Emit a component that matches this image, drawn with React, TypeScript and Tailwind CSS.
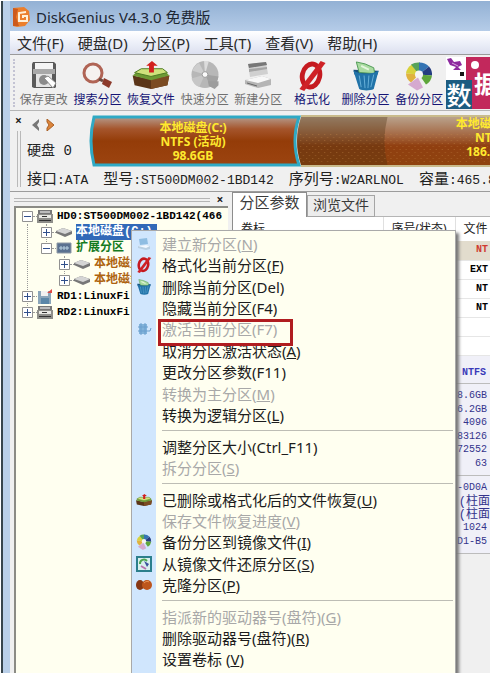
import React from "react";

const sans = "font-['Noto_Sans','Noto_Sans_CJK_SC',sans-serif]";
const mono = "font-['Liberation_Mono','Noto_Sans_CJK_SC',monospace]";

type IconProps = { className?: string };

function LogoIcon() {
  return (
    <svg viewBox="0 0 20 22" className="h-[22px] w-5" aria-hidden="true">
      <path d="M1 2l11-1 5 4 1 9-5 6-8 1-4-1z" fill="#ec7f2c" />
      <path d="M1 2l5 1-2 8 3 9-6 0z" fill="#cc5a1c" />
      <path d="M14 6l-7 1v8h8v-5h-4v2" fill="none" stroke="#fff0d8" strokeWidth="2" />
    </svg>
  );
}

function SaveIcon({ className = "" }: IconProps) {
  return (
    <svg viewBox="0 0 28 28" className={className} aria-hidden="true">
      <path d="M3 1h21l2 2v23l-1 1H4l-2-1V3z" fill="#5a5a5a" />
      <path d="M5 2h18v6H5z" fill="#f4f4f4" />
      <path d="M3 8h22v5H3z" fill="#a9a9a9" />
      <path d="M6 13h16v13H6z" fill="#e4e4e4" />
      <circle cx="14" cy="19" r="5" fill="#8b8b8b" />
      <path d="M14 17l4-2 8 7-3 5z" fill="#fff" stroke="#888" />
    </svg>
  );
}

function SearchIcon({ className = "" }: IconProps) {
  return (
    <svg viewBox="0 0 30 28" className={className} aria-hidden="true">
      <circle cx="11" cy="12" r="9" fill="#f6f2f0" stroke="#b06455" strokeWidth="3" />
      <path d="M17 18l4 2" stroke="#6e4b42" strokeWidth="3" />
      <path d="M22 17l8 4-3 6-7-4z" fill="#8c3a2b" />
    </svg>
  );
}

function RecoverIcon({ className = "" }: IconProps) {
  return (
    <svg viewBox="0 0 38 29" className={className} aria-hidden="true">
      <path d="M0 15l19 4 19-4-2 10-17 4-17-4z" fill="#5b3518" />
      <path d="M19 19l19-4-2 10-17 4z" fill="#7b4b22" />
      <path d="M0 15l7-6h25l6 6-19 5z" fill="#6d9a34" />
      <path d="M2 12l7-4h22l5 4-17 4z" fill="#cfe27c" stroke="#4c7a22" />
      <path d="M17 12V5h-3l6-5 6 5h-4v7z" fill="#d2201d" />
    </svg>
  );
}

function DiscIcon({ className = "" }: IconProps) {
  return (
    <svg viewBox="0 0 30 29" className={className} aria-hidden="true">
      <circle cx="15" cy="14" r="14" fill="#b7b7b7" />
      <path d="M15 14L2 10A14 14 0 0 1 9 2z" fill="#cdcdcd" />
      <path d="M15 14l-1-14h5z" fill="#dcdcdc" />
      <path d="M15 14l14 2a14 14 0 0 1-8 11z" fill="#a2a2a2" />
      <path d="M15 14l-6 13a14 14 0 0 1-8-9z" fill="#c6c6c6" />
      <circle cx="15" cy="14" r="3" fill="#fafafa" stroke="#999" />
      <path d="M18 21h11v4l-4 4-6-3z" fill="#9d9d9d" />
    </svg>
  );
}

function DriveNewIcon({ className = "" }: IconProps) {
  return (
    <svg viewBox="0 0 28 28" className={className} aria-hidden="true">
      <path d="M4 3l18-2 2 12-18 3z" fill="#d0d0d0" />
      <path d="M4 3l18-2 1 3-18 3z" fill="#777" />
      <path d="M5 8l18-2v2L5 11z" fill="#a5a5a5" />
      <path d="M1 19l17-4 9 3v6l-13 3-13-4z" fill="#b5b5b5" />
      <path d="M1 19l17-4 9 3-13 4z" fill="#f8f8f8" />
      <path d="M3 22l10 3" stroke="#666" />
    </svg>
  );
}

function FormatIcon({ className = "" }: IconProps) {
  return (
    <svg viewBox="0 0 30 31" className={className} aria-hidden="true">
      <ellipse cx="14" cy="15" rx="9" ry="12" fill="none" stroke="#c51a20" strokeWidth="5" transform="rotate(12 14 15)" />
      <path d="M24 0l5 2L7 31l-5-2z" fill="#cf2226" />
    </svg>
  );
}

function TrashIcon({ className = "" }: IconProps) {
  return (
    <svg viewBox="0 0 28 31" className={className} aria-hidden="true">
      <path d="M1 9l26 1-1 4H2z" fill="#174f7c" />
      <path d="M7 12L4 1l9 2 9 4 1 6z" fill="#a9dba0" stroke="#4f9a55" />
      <path d="M9 5l8 4" stroke="#e4f6de" strokeWidth="2" />
      <path d="M1 10c8 4 18 4 26 0l-5 19c-4 2-11 2-15 0z" fill="#2173a8" />
      <path d="M7 15l2 12M12 15l1 13M17 15l-1 13M22 14l-3 13" stroke="#69b1da" strokeWidth="1" />
    </svg>
  );
}

function WheelIcon({ className = "" }: IconProps) {
  return (
    <svg viewBox="0 0 28 29" className={className} aria-hidden="true">
      <path d="M14 13L1 12A13 12 0 0 1 7 3z" fill="#d8d23c" />
      <path d="M14 13L6 3A13 12 0 0 1 15 1z" fill="#56a35a" />
      <path d="M14 13V1A13 12 0 0 1 24 5z" fill="#3474b3" />
      <path d="M14 13L24 5a12 12 0 0 1 3 9z" fill="#253d80" />
      <path d="M14 13l13 1a12 12 0 0 1-6 9z" fill="#5fa63b" />
      <path d="M14 13L1 12c0 4 2 7 5 9z" fill="#e0b23e" />
      <circle cx="14" cy="13" r="4" fill="#f5f5f5" />
      <path d="M13 16l5 10-6 3-9-6z" fill="#d5a9cf" />
    </svg>
  );
}

function RestoreIcon({ className = "" }: IconProps) {
  return (
    <svg viewBox="0 0 16 16" className={className} aria-hidden="true">
      <path d="M1 1h14v14H1z" fill="#d9f0ee" stroke="#2b7f8c" strokeWidth="2" />
      <path d="M4 8a4 4 0 0 1 7-3" fill="none" stroke="#4fa651" strokeWidth="2" />
      <path d="M8 5l5 3-2 3z" fill="#3a529c" />
      <path d="M5 10l5 3" stroke="#b772ae" strokeWidth="2" />
    </svg>
  );
}

function CloneIcon({ className = "" }: IconProps) {
  return (
    <svg viewBox="0 0 16 16" className={className} aria-hidden="true">
      <ellipse cx="4" cy="8" rx="4" ry="5" fill="#873713" />
      <ellipse cx="11" cy="8" rx="5" ry="5" fill="#bd551c" />
      <path d="M8 6c2-2 4-2 5-1" stroke="#e99354" fill="none" />
    </svg>
  );
}

function NewPartIcon({ className = "" }: IconProps) {
  return (
    <svg viewBox="0 0 16 16" className={className} aria-hidden="true">
      <path d="M3 3l8-1 1 6-8 1z" fill="#8fbde2" />
      <path d="M2 10l8-1 4 1v3l-4 1-8-2z" fill="#b9cfe2" />
      <path d="M2 10l8-1 4 1-4 2z" fill="#f2f8ff" />
    </svg>
  );
}

function ActivateIcon({ className = "" }: IconProps) {
  return (
    <svg viewBox="0 0 16 16" className={className} aria-hidden="true">
      <path d="M3 3h8v10H3z" fill="#82b3da" />
      <path d="M5 2v12M9 2v12M2 6h10M2 10h12l1-3" fill="none" stroke="#6a9fce" />
    </svg>
  );
}

function Banner() {
  return (
    <div className="grid h-[52px] min-w-0 flex-1 grid-cols-[20px_1fr] overflow-hidden bg-[#c2285c] text-white">
      <div className="col-start-1 row-start-1 h-6 bg-white">
        <svg viewBox="0 0 20 24" className="h-6 w-5" aria-hidden="true">
          <path d="M1 2l4-1 3 4 6-1 2 4-4 2 3 3-8 0 3-3-6-2z" fill="#8d2a9f" />
          <path d="M6 6l6 3" stroke="#d8a9de" />
          <path d="M14 15h4v4h-4z" fill="#151515" />
        </svg>
      </div>
      <div className="relative col-start-2 row-start-1 font-['Noto_Sans_CJK_SC',sans-serif]">
        <span className="absolute left-[5px] top-1 size-2 rounded-full bg-white" />
        <span className="absolute left-2 top-3 text-2xl font-bold leading-7">据</span>
        <span className="absolute -left-5 top-[23px] h-[30px] w-[26px] bg-[#1d5c80] text-center text-[25px] font-medium leading-7">数</span>
      </div>
    </div>
  );
}

const tools = [
  { label: "保存更改", off: true, icon: <SaveIcon className="h-7 w-7" /> },
  { label: "搜索分区", off: false, icon: <SearchIcon className="h-7 w-[30px]" /> },
  { label: "恢复文件", off: false, icon: <RecoverIcon className="h-7 w-[38px]" /> },
  { label: "快速分区", off: true, icon: <DiscIcon className="h-7 w-[30px]" /> },
  { label: "新建分区", off: true, icon: <DriveNewIcon className="h-7 w-7" /> },
  { label: "格式化", off: false, icon: <FormatIcon className="h-[30px] w-[30px]" /> },
  { label: "删除分区", off: false, icon: <TrashIcon className="h-[30px] w-7" /> },
  { label: "备份分区", off: false, icon: <WheelIcon className="h-[30px] w-7" /> },
];

const menus = ["文件(F)", "硬盘(D)", "分区(P)", "工具(T)", "查看(V)", "帮助(H)"];

type Item = { text: string; accel?: string; tail?: string; off?: boolean; icon?: React.ReactNode; marked?: boolean };

const small = "size-4";
const groups: { height: string; items: Item[] }[] = [
  {
    height: "h-[193px]",
    items: [
      { text: "建立新分区(", accel: "N", tail: ")", off: true, icon: <NewPartIcon className={small} /> },
      { text: "格式化当前分区(", accel: "F", tail: ")", icon: <FormatIcon className={small} /> },
      { text: "删除当前分区(Del)", icon: <TrashIcon className={small} /> },
      { text: "隐藏当前分区(F4)" },
      { text: "激活当前分区(F7)", off: true, icon: <ActivateIcon className={small} />, marked: true },
      { text: "取消分区激活状态(", accel: "A", tail: ")" },
      { text: "更改分区参数(F11)" },
      { text: "转换为主分区(", accel: "M", tail: ")", off: true },
      { text: "转换为逻辑分区(", accel: "L", tail: ")" },
    ],
  },
  {
    height: "h-[43px]",
    items: [
      { text: "调整分区大小(Ctrl_F11)" },
      { text: "拆分分区(", accel: "S", tail: ")", off: true },
    ],
  },
  {
    height: "h-[107px]",
    items: [
      { text: "已删除或格式化后的文件恢复(", accel: "U", tail: ")", icon: <RecoverIcon className={small} /> },
      { text: "保存文件恢复进度(", accel: "V", tail: ")", off: true },
      { text: "备份分区到镜像文件(", accel: "I", tail: ")", icon: <WheelIcon className={small} /> },
      { text: "从镜像文件还原分区(", accel: "S", tail: ")", icon: <RestoreIcon className={small} /> },
      { text: "克隆分区(", accel: "P", tail: ")", icon: <CloneIcon className={small} /> },
    ],
  },
  {
    height: "h-[64px]",
    items: [
      { text: "指派新的驱动器号(盘符)(", accel: "G", tail: ")", off: true },
      { text: "删除驱动器号(盘符)(", accel: "R", tail: ")" },
      { text: "设置卷标 (", accel: "V", tail: ")" },
    ],
  },
];

function ContextMenu() {
  return (
    <div
      role="menu"
      className={`absolute left-[131px] top-[230px] h-[460px] w-[325px] border border-[#a9a9a9] bg-[#fffff0] bg-linear-to-r from-[#d0e6fd] from-[24px] to-[#fffff0] to-[24px] pt-[2px] shadow-[3px_3px_3px_#777] ${sans}`}
    >
      {groups.map((g, n) => (
        <React.Fragment key={g.height}>
          {n > 0 && <div role="separator" className="mb-[5px] ml-[30px] mr-[2px] mt-1 h-px bg-[#bdbdb5]" />}
          <div className={`grid ${g.height}`}>
            {g.items.map((it) => (
              <button
                key={it.text}
                type="button"
                role="menuitem"
                disabled={it.off}
                className={`relative flex min-h-0 items-center text-left text-[15px] leading-5 ${it.off ? "text-[#a8a8a8]" : "text-[#1c1c1c]"}`}
              >
                <span className="flex w-[30px] shrink-0 pl-1">{it.icon}</span>
                <span className="whitespace-nowrap">
                  {it.text}
                  {it.accel && <u className="underline-offset-1">{it.accel}</u>}
                  {it.tail}
                </span>
                {it.marked && <span className="absolute left-[26px] top-0 z-10 h-[27px] w-[135px] border-[3px] border-[#b01d20]" />}
              </button>
            ))}
          </div>
        </React.Fragment>
      ))}
    </div>
  );
}

function DiskMap() {
  return (
    <div className="flex h-[52px] min-w-0 flex-1 overflow-hidden text-center text-xs font-bold leading-[14px] text-[#ffe92e]">
      <button type="button" className="relative h-[52px] w-[212px] shrink-0">
        <svg viewBox="0 0 212 52" className="absolute inset-0 h-[52px] w-[212px]" aria-hidden="true">
          <defs>
            <linearGradient id="volC" x1="0" y1="0" x2="0" y2="1">
              <stop offset="0" stopColor="#b59a8b" />
              <stop offset="0.25" stopColor="#a5552c" />
              <stop offset="0.5" stopColor="#943c08" />
              <stop offset="1" stopColor="#9c4410" />
            </linearGradient>
          </defs>
          <path d="M5 2H210Q202 26 210 50H5Q-1 26 5 2z" fill="url(#volC)" stroke="#2fa9c4" strokeWidth="3" />
        </svg>
        <span className="relative flex flex-col pr-1 pt-[2px]">
          <span>本地磁盘(C:)</span>
          <span>NTFS (活动)</span>
          <span>98.6GB</span>
        </span>
      </button>
      <button type="button" className="relative -ml-2 h-[52px] min-w-0 flex-1 overflow-hidden">
        <svg viewBox="0 0 196 52" preserveAspectRatio="none" className="absolute inset-0 h-[52px] w-full" aria-hidden="true">
          <defs>
            <linearGradient id="volD" x1="0" y1="0" x2="0" y2="1">
              <stop offset="0" stopColor="#b9a28c" />
              <stop offset="0.4" stopColor="#a3653f" />
              <stop offset="0.6" stopColor="#903f10" />
              <stop offset="1" stopColor="#8f430f" />
            </linearGradient>
            <pattern id="used" width="6" height="6" patternUnits="userSpaceOnUse">
              <path d="M1 1h1v1H1zM4 4h1v1H4z" fill="#c98d4c" />
            </pattern>
          </defs>
          <path d="M8 2H196V50H8Q0 26 8 2z" fill="url(#volD)" />
          <path d="M8 2H94Q88 26 94 50H8Q0 26 8 2z" fill="#4a3010" opacity="0.35" />
          <path d="M6 18H196V48H7z" fill="url(#used)" opacity="0.4" />
          <path d="M8 1H196M8 51H196" stroke="#c9bb8b" strokeWidth="2" />
        </svg>
        <span className="absolute left-[160px] top-[2px] flex w-[74px] flex-col whitespace-nowrap">
          <span>本地磁盘(D:)</span>
          <span>NTFS</span>
          <span>186.2GB</span>
        </span>
      </button>
    </div>
  );
}

function Info({ name, value }: { name: string; value: string }) {
  return (
    <span className="shrink-0 whitespace-nowrap">
      {name}
      <span className="text-[13px]">:{value}</span>
    </span>
  );
}

function Expander({ open }: { open: boolean }) {
  return (
    <svg viewBox="0 0 11 11" className="size-[11px] shrink-0" aria-hidden="true">
      <path d="M.5.5h10v10H.5z" fill="#fff" stroke="#919191" />
      <path d={open ? "M2 5.5h7" : "M2 5.5h7M5.5 2v7"} stroke="#304f8c" />
    </svg>
  );
}

function HostIcon({ raid = false }: { raid?: boolean }) {
  return (
    <svg viewBox="0 0 16 15" className="h-[15px] w-4 shrink-0" aria-hidden="true">
      {raid ? (
        <>
          <path d="M1 2h13v13H1z" fill="#8aa5ba" />
          <path d="M4 2h7v5H4z" fill="#f1f1f1" />
          <path d="M4 9h8v6H4z" fill="#5b87a8" />
          <path d="M10 4l5-4v4z" fill="#dd4a45" />
        </>
      ) : (
        <>
          <path d="M1 1h14v4H1z" fill="#777" />
          <path d="M3 2h10v2H3z" fill="#bcbcbc" />
          <path d="M0 5h16v9H0z" fill="#8e8e8a" />
          <path d="M2 6h12v3H2z" fill="#e9e9e4" />
          <path d="M5 7h5v1H5zM2 11h12v1H2z" fill="#333" />
        </>
      )}
    </svg>
  );
}

function VolumeIcon() {
  return (
    <svg viewBox="0 0 16 12" className="h-3 w-4 shrink-0" aria-hidden="true">
      <path d="M0 5l7-3 9 3v3l-7 3-9-4z" fill="#777" />
      <path d="M0 5l7-3 9 3-7 3z" fill="#d5d5d5" />
    </svg>
  );
}

function ExtendedIcon() {
  return (
    <svg viewBox="0 0 16 12" className="h-3 w-4 shrink-0" aria-hidden="true">
      <path d="M1 1h14v10H1z" fill="#5a7190" stroke="#8f9aa5" />
      <path d="M3 6h10M5 4v4M8 4v4M11 4v4" stroke="#b9d3e2" />
    </svg>
  );
}

const tree = [
  { pad: "pl-[6px]", open: true, icon: <HostIcon />, text: "HD0:ST500DM002-1BD142(466", style: "text-[11px] text-black" },
  { pad: "pl-[25px]", open: false, icon: <VolumeIcon />, text: "本地磁盘(C:)", style: "text-xs bg-[#3269b8] text-white pr-1" },
  { pad: "pl-[25px]", open: true, icon: <ExtendedIcon />, text: "扩展分区", style: "text-xs text-[#147a1e]" },
  { pad: "pl-[43px]", open: false, icon: <VolumeIcon />, text: "本地磁盘(D:)", style: "text-xs text-[#ae6410]" },
  { pad: "pl-[43px]", open: false, icon: <VolumeIcon />, text: "本地磁盘(E:)", style: "text-xs text-[#ae6410]" },
  { pad: "pl-[6px]", open: false, icon: <HostIcon raid />, text: "RD1:LinuxFi", style: "text-[11px] text-black" },
  { pad: "pl-[6px]", open: false, icon: <HostIcon />, text: "RD2:LinuxFi", style: "text-[11px] text-black" },
];

function TreePane() {
  return (
    <section className="flex w-[218px] shrink-0 flex-col pl-1">
      <div className="flex h-[14px] items-center gap-1 pr-[2px] pt-[2px]">
        <span className="h-1 flex-1 border-y border-[#b5b5b5]" />
        <button type="button" aria-label="关闭" className="w-3 text-xs font-bold leading-3 text-[#222]">×</button>
      </div>
      <ul className={`relative min-h-0 flex-1 overflow-hidden border-l-2 border-t-2 border-[#8b8b85] bg-[#fffff0] font-bold ${mono}`}>
        <span className="absolute left-[11px] top-4 h-[84px] border-l border-dotted border-[#999]" />
        <span className="absolute left-[30px] top-4 h-5 border-l border-dotted border-[#999]" />
        <span className="absolute left-[48px] top-12 h-5 border-l border-dotted border-[#999]" />
        {tree.map((t) => (
          <li key={t.text} className={`relative flex h-4 items-center ${t.pad}`}>
            <Expander open={t.open} />
            <span className="w-1 shrink-0 border-t border-dotted border-[#999]" />
            {t.icon}
            <span className={`ml-1 whitespace-nowrap leading-4 ${t.style}`}>{t.text}</span>
          </li>
        ))}
      </ul>
    </section>
  );
}

const rows = [
  { fs: "NT", style: "bg-[#e2dccd] text-[#cf3a30]" },
  { fs: "EXT", style: "bg-white" },
  { fs: "NT", style: "bg-white" },
  { fs: "NT", style: "bg-white" },
  { fs: "", style: "bg-white" },
  { fs: "", style: "bg-white" },
];

function DetailPane() {
  return (
    <section className="flex min-w-0 flex-1 flex-col overflow-hidden pl-1">
      <div role="tablist" className={`flex h-[25px] items-end border-l border-[#8d8d8d] text-[15px] leading-5 ${mono}`}>
        <button role="tab" type="button" aria-selected="true" className="h-[25px] w-[74px] border-r border-t border-[#8d8d8d] bg-white text-[#3a3a3a]">分区参数</button>
        <button role="tab" type="button" aria-selected="false" className="h-[22px] w-[68px] border border-[#a5a5a5] bg-[#ececec] text-sm leading-5 text-[#3a3a3a]">浏览文件</button>
        <span className="h-px flex-1 bg-[#b5b5b5]" />
      </div>
      <table className="w-full table-fixed border-l border-[#8d8d8d] bg-white text-xs">
        <thead>
          <tr className={`h-[24px] text-left leading-4 text-[#222] ${sans}`}>
            <th className="pl-2 font-normal">卷标</th>
            <th className="w-[72px] whitespace-nowrap border-l border-[#e0e0e0] pl-2 font-normal">序号(状态)</th>
            <th className="w-[35px] whitespace-nowrap border-l border-[#e0e0e0] pl-2 font-normal">文件</th>
          </tr>
        </thead>
        <tbody className={mono}>
          {rows.map((r, i) => (
            <tr key={i} className={`h-[19px] border-b border-[#e6e6e6] text-[10px] font-bold leading-4 ${r.style}`}>
              <td />
              <td />
              <td className="pr-[2px] text-right">{r.fs}</td>
            </tr>
          ))}
        </tbody>
      </table>
      <div className={`border-l border-[#8d8d8d] text-right text-[10px] text-[#34348c] ${mono}`}>
        <p className="h-7 border-b border-[#bcbcbc] bg-[#f0f0f8] pr-1 font-bold leading-[34px] text-[#3a3ab8]">NTFS</p>
        <div className="grid h-[92px] items-center border-b border-[#bcbcbc] bg-[#f0f0f8] pb-1 pr-[3px] pt-[6px] leading-3">
          {["8.6GB", "6.2GB", "4096", "83126", "72552", "63"].map((v) => (
            <span key={v}>{v}</span>
          ))}
        </div>
        <div className="grid h-[78px] items-center border-b border-[#bcbcbc] bg-[#f0f0f8] pb-1 pr-[3px] pt-[6px] leading-3">
          <span>-0D0A</span>
          <span className="-mr-[3px] text-xs leading-3">(柱面</span>
          <span className="-mr-[3px] text-xs leading-3">(柱面</span>
          <span>1024</span>
          <span>D1-B5</span>
        </div>
      </div>
    </section>
  );
}

export default function App() {
  return (
    <div className="h-screen overflow-hidden bg-white pl-px pr-[3px] pt-px">
      <div className={`flex h-full flex-col border-l-2 border-[#37454c] bg-[#b9cfe8] pl-[7px] ${sans}`}>
        <header className="flex h-[30px] shrink-0 items-center gap-1 bg-linear-to-b from-[#93b1d4] to-[#b5cce8] pl-[2px] pt-[2px] text-[#1d2733]">
          <LogoIcon />
          <h1 className="whitespace-nowrap text-[15px]">DiskGenius V4.3.0 免费版</h1>
        </header>
        <nav className="flex h-6 shrink-0 items-center gap-[14px] border-b border-[#9a9a9a] bg-linear-to-b from-white via-[#edf0f9] to-[#dce0ef] pl-[7px] text-[15px] leading-5 text-[#2a2a2a]">
          {menus.map((m) => (
            <button key={m} type="button" className="whitespace-nowrap">{m}</button>
          ))}
        </nav>
        <div className="flex h-[56px] shrink-0 items-center border-b border-[#b5b5b5] bg-[#f0f0f0]">
          <span className="ml-[3px] mr-1 h-12 border-l-2 border-dotted border-[#c3c3d3]" />
          <div className="-ml-[2px] grid w-[429px] shrink-0 grid-cols-8">
            {tools.map((t) => (
              <button
                key={t.label}
                type="button"
                disabled={t.off}
                className={`flex h-[52px] flex-col items-center justify-between whitespace-nowrap pb-px pt-1 text-xs leading-4 ${t.off ? "text-[#707070]" : "text-[#151575]"}`}
              >
                {t.icon}
                <span>{t.label}</span>
              </button>
            ))}
          </div>
          <Banner />
        </div>
        <section className="flex h-[81px] shrink-0 border-b border-[#9c9c9c] bg-[#f0f0f0] pt-1 text-[#222]">
          <div className="flex w-[17px] shrink-0 flex-col items-center gap-1">
            <button type="button" aria-label="关闭" className="text-xs font-bold leading-3">×</button>
            <span className="mb-1 w-1 flex-1 border-x border-[#b9b9b9]" />
          </div>
          <div className="flex min-w-0 flex-1 flex-col">
            <div className="flex">
              <div className="flex w-[62px] shrink-0 flex-col gap-2 pt-1">
                <div className="flex gap-1 pl-1">
                  <button type="button" aria-label="上一个">
                    <svg viewBox="0 0 11 12" className="h-3 w-[11px]" aria-hidden="true"><path d="M8 0L1 6l7 6V9L6 6l2-3z" fill="#777" /></svg>
                  </button>
                  <button type="button" aria-label="下一个">
                    <svg viewBox="0 0 11 12" className="h-3 w-[11px]" aria-hidden="true"><path d="M1 0l7 6-7 6V9l2-3-2-3z" fill="#dc853c" stroke="#a96026" /></svg>
                  </button>
                </div>
                <span className={`whitespace-nowrap text-sm leading-6 ${mono}`}>硬盘 0</span>
              </div>
              <DiskMap />
            </div>
            <div className={`flex h-6 items-center gap-[15px] overflow-hidden pt-[3px] text-[15px] leading-6 ${mono}`}>
              <Info name="接口" value="ATA" />
              <Info name="型号" value="ST500DM002-1BD142" />
              <Info name="序列号" value="W2ARLNOL" />
              <Info name="容量" value="465.8GB" />
            </div>
          </div>
        </section>
        <main className="flex min-h-0 flex-1 bg-[#f0f0f0]">
          <TreePane />
          <DetailPane />
        </main>
      </div>
      <ContextMenu />
    </div>
  );
}
